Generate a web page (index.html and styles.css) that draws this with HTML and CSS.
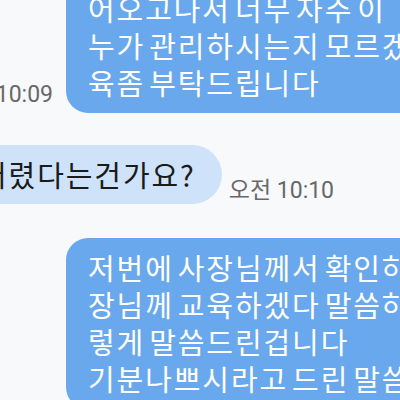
FILE: index.html
```html
<!DOCTYPE html>
<html lang="ko">
<head>
<meta charset="utf-8">
<link rel="stylesheet" href="styles.css">
</head>
<body>
<div class="chat">
  <div class="row row-out first">
    <div class="time-col"><span class="time">10:09</span></div>
    <div class="bubble bubble-out">
      <div class="line">어오고나서 너무 자주 이</div>
      <div class="line">누가 관리하시는지 모르겠</div>
      <div class="line">육좀 부탁드립니다</div>
    </div>
  </div>
  <div class="row row-in">
    <div class="bubble bubble-in">
      <div class="line">버렸다는건가요?</div>
    </div>
    <span class="time">오전 10:10</span>
  </div>
  <div class="row row-out last">
    <div class="time-col"></div>
    <div class="bubble bubble-out">
      <div class="line">저번에 사장님께서 확인하</div>
      <div class="line">장님께 교육하겠다 말씀하</div>
      <div class="line">렇게 말씀드린겁니다</div>
      <div class="line">기분나쁘시라고 드린 말씀</div>
    </div>
  </div>
</div>
</body>
</html>
```

FILE: styles.css
```css
html, body {
  margin: 0;
  padding: 0;
}
body {
  width: 400px;
  height: 400px;
  overflow: hidden;
  background: #f8f9fb;
  font-family: "Noto Sans CJK KR", "Noto Sans", sans-serif;
}
.chat {
  display: flex;
  flex-direction: column;
  gap: 32px;
}
.row {
  display: flex;
  align-items: flex-end;
  white-space: nowrap;
}
.row.first {
  margin-top: -21px;
}
.row.last {
  margin-top: 2px;
}
.row-out {
  gap: 13px;
}
.time-col {
  width: 53px;
  flex: none;
  display: flex;
  justify-content: flex-end;
  margin-bottom: 6px;
}
.row-in {
  margin-left: -44px;
  gap: 7px;
}
.row-in .time {
  margin-bottom: 1px;
}
.time {
  font-family: Roboto, "Noto Sans CJK KR", sans-serif;
  font-size: 23px;
  line-height: 24px;
  color: #686868;
  flex: none;
}
.bubble {
  font-size: 29px;
  line-height: 37px;
  letter-spacing: 1.9px;
  word-spacing: -6px;
  flex: none;
}
.bubble-out {
  background: #69a8ec;
  color: #ffffff;
  border-radius: 22px 0 0 22px;
  padding: 11px 120px 12px 22px;
  width: 440px;
}
.bubble-in {
  background: #cee3f9;
  color: #1b1b1b;
  border-radius: 30px;
  padding: 11px 26px 11px 24px;
}
```
